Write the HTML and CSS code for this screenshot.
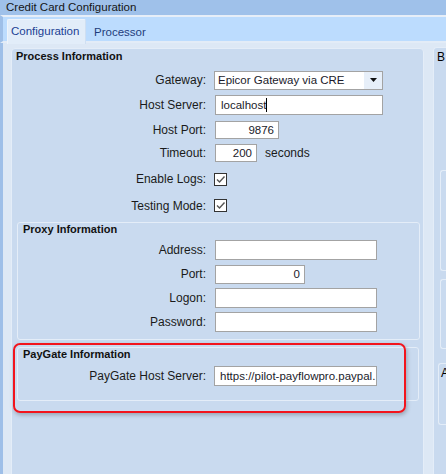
FILE: index.html
```html
<!DOCTYPE html>
<html lang="en">
<head>
    <meta charset="UTF-8">
    <meta name="viewport" content="width=device-width, initial-scale=1.0">
    <title>Credit Card Configuration</title>
    <link rel="stylesheet" href="styles.css">
</head>
<body>
    <div class="window">
        <div class="titlebar">Credit Card Configuration</div>
        <div class="tabs">
            <div class="tab active">Configuration</div>
            <div class="tab">Processor</div>
        </div>
        <div class="page">
            <div class="group main">
                <div class="group-title">Process Information</div>
                <div class="row r-gateway">
                    <label>Gateway:</label>
                    <div class="select">
                        <span class="select-text">Epicor Gateway via CRE</span>
                        <span class="select-btn">
                            <svg width="7" height="4" viewBox="0 0 7 4"><path d="M0 0h7L3.5 4z" fill="#111"/></svg>
                        </span>
                    </div>
                </div>
                <div class="row r-host">
                    <label>Host Server:</label>
                    <div class="input w-long">localhost<span class="caret"></span></div>
                </div>
                <div class="row r-port">
                    <label>Host Port:</label>
                    <div class="input num w-port">9876</div>
                </div>
                <div class="row r-timeout">
                    <label>Timeout:</label>
                    <div class="input num w-timeout">200</div>
                    <span class="unit">seconds</span>
                </div>
                <div class="row r-logs">
                    <label>Enable Logs:</label>
                    <span class="check">
                        <svg width="11" height="11" viewBox="0 0 11 11"><path d="M2 5.5l2.5 2.5L9.5 2.5" fill="none" stroke="#555" stroke-width="1.4"/></svg>
                    </span>
                </div>
                <div class="row r-testing">
                    <label>Testing Mode:</label>
                    <span class="check">
                        <svg width="11" height="11" viewBox="0 0 11 11"><path d="M2 5.5l2.5 2.5L9.5 2.5" fill="none" stroke="#555" stroke-width="1.4"/></svg>
                    </span>
                </div>

                <div class="group sub proxy">
                    <div class="group-title small">Proxy Information</div>
                    <div class="row">
                        <label>Address:</label>
                        <div class="input w-proxy"></div>
                    </div>
                    <div class="row">
                        <label>Port:</label>
                        <div class="input num w-pport">0</div>
                    </div>
                    <div class="row">
                        <label>Logon:</label>
                        <div class="input w-proxy"></div>
                    </div>
                    <div class="row">
                        <label>Password:</label>
                        <div class="input w-proxy"></div>
                    </div>
                </div>

                <div class="group sub paygate">
                    <div class="group-title small">PayGate Information</div>
                    <div class="row">
                        <label>PayGate Host Server:</label>
                        <div class="input w-paygate">https://pilot-payflowpro.paypal.</div>
                    </div>
                </div>
            </div>

            <div class="side">
                <div class="side-title">B</div>
                <div class="side-box one"></div>
                <div class="side-box two"></div>
                <div class="side-box three"><span class="side-title">A</span></div>
            </div>
        </div>
        <div class="highlight"></div>
    </div>
</body>
</html>
```

FILE: styles.css
```css
body {
    margin: 0;
    background-color: #dde8f5;
    font-family: "Liberation Sans", Arial, sans-serif;
    overflow: hidden;
}
.window {
    position: relative;
    width: 446px;
    height: 474px;
    overflow: hidden;
}
.titlebar {
    height: 15px;
    line-height: 15px;
    padding-left: 6px;
    background-color: #9fc1ea;
    color: #151515;
    font-size: 11.5px;
}
.tabs {
    display: flex;
    height: 24px;
    padding-left: 4px;
    border-top: 2px solid #e6eef8;
    border-bottom: 2px solid #e3ecf7;
    border-left: 3px solid #9ebfe8;
    background-color: #bcdcfe;
}
.tab {
    padding: 0 4px;
    line-height: 24px;
    font-size: 11.5px;
    color: #1e3c7c;
    margin-top: 2px;
    height: 24px;
}
.tab.active {
    background-color: #e2edf9;
    border-top: 1px solid #eef4fb;
    border-left: 1px solid #eef4fb;
    border-right: 1px solid #cfdff2;
    border-radius: 2px 2px 0 0;
    margin-bottom: -2px;
    line-height: 22px;
    padding: 0 4px 0 3px;
    width: 70px;
    color: #1b3f94;
}
.tab + .tab {
    margin-left: 4px;
    line-height: 26px;
}
.page {
    display: flex;
    height: 431px;
    border-left: 3px solid #9ebfe8;
    padding: 5px 0 0 8px;
}
.group {
    background-color: #c9daef;
    border: 1px solid #e4edf8;
    border-radius: 4px;
}
.main {
    width: 411px;
    height: 460px;
    flex-shrink: 0;
}
.group-title {
    height: 19px;
    line-height: 14px;
    padding-left: 4px;
    font-size: 11px;
    font-weight: bold;
    color: #111;
}
.group-title.small {
    height: 15px;
    line-height: 13px;
    padding-left: 5px;
}
.row {
    display: flex;
    align-items: center;
    height: 24px;
    gap: 8px;
}
.row label {
    width: 194px;
    text-align: right;
    font-size: 12px;
    color: #1a1a1a;
    flex-shrink: 0;
}
.r-host { height: 26px; }
.r-port { height: 23px; }
.r-logs { height: 28px; }
.r-testing { height: 25px; }
.select {
    display: flex;
    width: 167px;
    height: 17px;
    border: 1px solid #a3a3a3;
    background: white;
}
.select-text {
    flex: 1;
    padding-left: 3px;
    line-height: 17px;
    font-size: 11.5px;
    color: #1a1a2a;
}
.select-btn {
    width: 18px;
    background-color: #e7eff9;
    display: flex;
    align-items: center;
    justify-content: center;
}
.input {
    box-sizing: border-box;
    height: 20px;
    border: 1px solid #a3a3a3;
    background: white;
    padding: 0 4px 0 5px;
    line-height: 18px;
    font-size: 11.5px;
    color: #1a1a2a;
    white-space: nowrap;
    overflow: hidden;
}
.input.num { text-align: right; }
.w-long { width: 168px; margin-left: 1px; }
.w-port { width: 64px; height: 18px; line-height: 16px; margin-left: 1px; }
.w-timeout { width: 42px; height: 18px; line-height: 16px; margin-left: 1px; }
.caret {
    display: inline-block;
    width: 1px;
    height: 14px;
    background: #000;
    vertical-align: -3px;
}
.unit {
    font-size: 12px;
    color: #1a1a1a;
}
.check {
    box-sizing: border-box;
    width: 13px;
    height: 13px;
    border: 1px solid #333;
    background: white;
    display: flex;
    align-items: center;
    justify-content: center;
}
.sub {
    margin-left: 5px;
    border-radius: 3px;
}
.proxy {
    width: 401px;
    margin-top: 4px;
    padding-bottom: 5px;
}
.sub .row label { width: 188px; }
.proxy .row { gap: 9px; }
.w-proxy { width: 162px; }
.w-pport { width: 90px; height: 19px; line-height: 17px; }
.paygate {
    width: 400px;
    margin-top: 7px;
    padding-bottom: 11px;
}
.paygate .row { height: 26px; }
.w-paygate { width: 163px; padding-left: 5px; }
.side {
    flex: 1;
    margin: -1px 0 0 9px;
    background-color: #c9daef;
    border-left: 1px solid #e4edf8;
    border-top: 1px solid #e4edf8;
    border-radius: 4px 0 0 0;
}
.side-title {
    display: block;
    padding: 2px 0 0 3px;
    font-size: 12px;
    color: #000;
}
.side-box {
    margin-left: 6px;
    border-left: 1px solid #e4edf8;
    border-top: 1px solid #e4edf8;
    border-bottom: 1px solid #e4edf8;
    border-radius: 3px 0 0 3px;
}
.side-box.one { margin-top: 106px; height: 99px; }
.side-box.two { margin-top: 8px; height: 68px; }
.side-box.three { margin-top: 14px; height: 60px; margin-left: 4px; }
.side-box.three .side-title { padding: 2px 0 0 2px; }
.highlight {
    position: absolute;
    left: 13px;
    top: 343px;
    width: 393px;
    height: 70px;
    box-sizing: border-box;
    border: 2px solid #f2141c;
    border-radius: 7px;
    box-shadow: 1px 2px 4px rgba(0, 0, 0, 0.25);
}
```
